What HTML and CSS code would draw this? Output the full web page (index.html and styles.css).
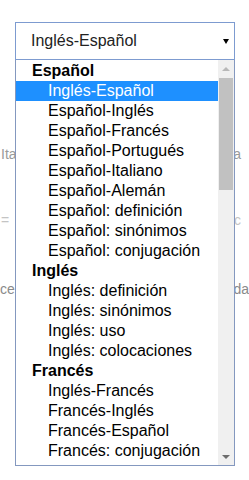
FILE: index.html
```html
<!DOCTYPE html>
<html>
<head>
<meta http-equiv="Content-Type" content="text/html; charset=utf-8"/>

<title>Diccionario</title>

<link rel="stylesheet" href="styles.css">

</head>

<body>

<div class="picker">
  <div class="select">
    <span class="select-value">Inglés-Español</span>
    <span class="caret"></span>
  </div>

  <div class="menu">
    <div class="list">
      <div class="group">Español</div>
      <div class="option selected">Inglés-Español</div>
      <div class="option">Español-Inglés</div>
      <div class="option">Español-Francés</div>
      <div class="option">Español-Portugués</div>
      <div class="option">Español-Italiano</div>
      <div class="option">Español-Alemán</div>
      <div class="option">Español: definición</div>
      <div class="option">Español: sinónimos</div>
      <div class="option">Español: conjugación</div>
      <div class="group">Inglés</div>
      <div class="option">Inglés: definición</div>
      <div class="option">Inglés: sinónimos</div>
      <div class="option">Inglés: uso</div>
      <div class="option">Inglés: colocaciones</div>
      <div class="group">Francés</div>
      <div class="option">Inglés-Francés</div>
      <div class="option">Francés-Inglés</div>
      <div class="option">Francés-Español</div>
      <div class="option">Francés: conjugación</div>
    </div>
    <div class="scrollbar">
      <div class="scroll-btn"><span class="arrow-up"></span></div>
      <div class="track"><div class="thumb"></div></div>
      <div class="scroll-btn"><span class="arrow-down"></span></div>
    </div>
  </div>
</div>

<!-- page text behind the open dropdown -->
<div class="behind row-1">
  <span>Italiano</span>
  <span>Alemana</span>
</div>
<div class="behind row-2">
  <span>=</span>
  <span>c</span>
</div>
<div class="behind row-3">
  <span>ce</span>
  <span>ida</span>
</div>

</body>

</html>
```

FILE: styles.css
```css
html, body {
   min-height: 480px;
}

body {
   margin: 0;
   font-family: "Liberation Sans", Arial, sans-serif;
   background-color: white;
   color: #000;
}

.picker {
   position: relative;
   width: 220px;
   margin: 22px 0 0 15px;
   z-index: 2;
}

.select {
   display: flex;
   align-items: center;
   justify-content: space-between;
   height: 36px;
   padding: 0 5px 0 15px;
   border: 1px solid #7d9bd0;
   background-color: white;
   font-size: 16px;
   color: #222;
}

.caret {
   width: 0;
   height: 0;
   margin-top: 1px;
   border-left: 3px solid transparent;
   border-right: 3px solid transparent;
   border-top: 5px solid #000;
}

/* the open option list lies over the page */
.menu {
   position: absolute;
   top: 100%;
   left: 0;
   width: 218px;
   height: 405px;
   display: flex;
   border: 1px solid #8498bf;
   border-top: none;
   background-color: white;
}

.list {
   flex: 1;
   overflow: hidden;
   padding-top: 1px;
   font-size: 16px;
   line-height: 20px;
}

.group {
   padding-left: 16px;
   font-weight: bold;
   height: 20px;
}

.option {
   padding-left: 32px;
   height: 20px;
   white-space: nowrap;
}

.option.selected {
   background-color: #1e90ff;
   color: white;
}

.scrollbar {
   width: 16px;
   display: flex;
   flex-direction: column;
   background-color: #f0f0f0;
}

.scroll-btn {
   height: 17px;
   display: flex;
   align-items: center;
   justify-content: center;
}

.track {
   flex: 1;
   padding: 1px 1px 0 1px;
}

.thumb {
   height: 112px;
   background-color: #c1c1c1;
}

.arrow-up {
   width: 0;
   height: 0;
   border-left: 4px solid transparent;
   border-right: 4px solid transparent;
   border-bottom: 4px solid #b8b8b8;
}

.arrow-down {
   width: 0;
   height: 0;
   border-left: 4px solid transparent;
   border-right: 4px solid transparent;
   border-top: 4px solid #6d6d6d;
}

.behind {
   display: flex;
   justify-content: space-between;
   padding: 0 8px 0 1px;
   font-size: 14px;
   line-height: 16px;
   color: #9a9a9a;
}

.row-1 {
   margin-top: 86px;
}

.row-2 {
   margin-top: 50px;
   color: #c4c4c4;
}

.row-3 {
   margin-top: 53px;
   padding-right: 0;
   padding-left: 0;
   color: #8a8a8a;
}
```
